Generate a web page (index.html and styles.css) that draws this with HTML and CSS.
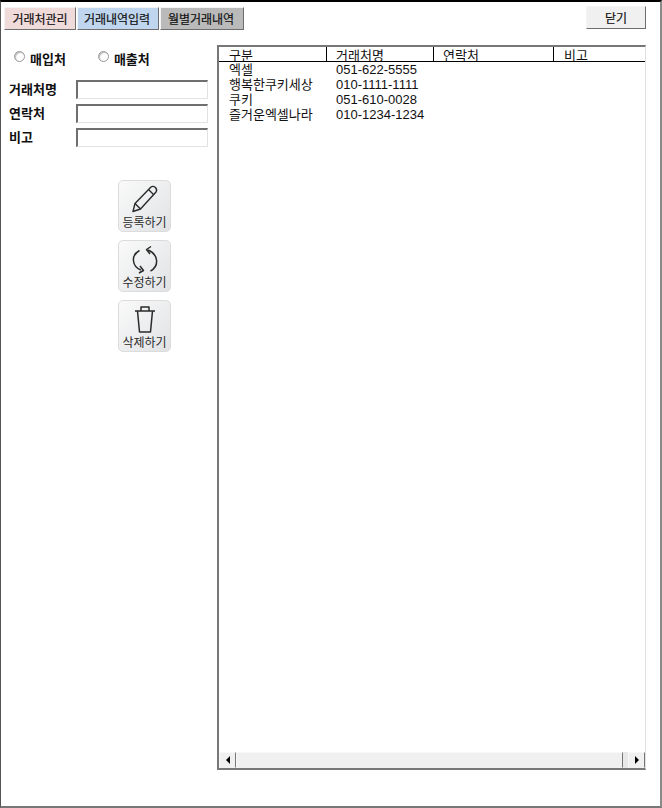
FILE: index.html
```html
<!DOCTYPE html>
<html lang="en">
<head>
    <meta charset="UTF-8">
    <title>거래처관리</title>
    <link rel="stylesheet" href="styles.css">
</head>
<body>
    <div class="window">
        <div class="toolbar">
            <div class="tabs">
                <button class="tab tab-red">거래처관리</button>
                <button class="tab tab-blue">거래내역입력</button>
                <button class="tab tab-gray">월별거래내역</button>
            </div>
            <button class="close-btn">닫기</button>
        </div>

        <div class="content">
            <div class="side">
                <div class="radios">
                    <label class="radio"><span class="radio-dot"></span>매입처</label>
                    <label class="radio"><span class="radio-dot"></span>매출처</label>
                </div>

                <div class="fields">
                    <div class="field"><span class="field-label">거래처명</span><span class="field-input"></span></div>
                    <div class="field"><span class="field-label">연락처</span><span class="field-input"></span></div>
                    <div class="field"><span class="field-label">비고</span><span class="field-input"></span></div>
                </div>

                <div class="actions">
                    <div class="action">
                        <svg width="30" height="30" viewBox="0 0 30 30" fill="none" stroke="#2a2a2a" stroke-width="1.4" stroke-linejoin="round">
                            <path d="M3 27.5 L5 19.5 L21 3 Q23 1.5 25.5 3.5 Q27.5 6 26 8 L10.5 25 Z"/>
                            <path d="M5 19.5 L10.5 25 M18.5 5.5 L24 11"/>
                        </svg>
                        <span>등록하기</span>
                    </div>
                    <div class="action">
                        <svg width="30" height="30" viewBox="0 0 30 30" fill="none" stroke="#2a2a2a" stroke-width="1.5" stroke-linejoin="round">
                            <path d="M9.5 6.5 C5 9 3 13 3.5 17 C4 21 6.5 24.5 11 26"/>
                            <path d="M20.5 27 C25 24.5 27 20 26.5 16 C26 12 24 8.5 18 6"/>
                            <path d="M21 2.5 L16.5 5.5 L20 10"/>
                            <path d="M10 22 L13.5 26.5 L9 29"/>
                        </svg>
                        <span>수정하기</span>
                    </div>
                    <div class="action">
                        <svg width="30" height="30" viewBox="0 0 30 30" fill="none" stroke="#2a2a2a" stroke-width="1.5" stroke-linejoin="round">
                            <path d="M5 7 H25"/>
                            <path d="M11 7 V3 H19 V7"/>
                            <path d="M7.5 7 L9.5 28 H20.5 L22.5 7"/>
                        </svg>
                        <span>삭제하기</span>
                    </div>
                </div>
            </div>

            <div class="list">
                <div class="list-head">
                    <div class="col col-1">구분</div>
                    <div class="col col-2">거래처명</div>
                    <div class="col col-3">연락처</div>
                    <div class="col col-4">비고</div>
                </div>
                <div class="list-body">
                    <div class="row"><div class="col-1">엑셀</div><div class="col-2">051-622-5555</div></div>
                    <div class="row"><div class="col-1">행복한쿠키세상</div><div class="col-2">010-1111-1111</div></div>
                    <div class="row"><div class="col-1">쿠키</div><div class="col-2">051-610-0028</div></div>
                    <div class="row"><div class="col-1">즐거운엑셀나라</div><div class="col-2">010-1234-1234</div></div>
                </div>
                <div class="scrollbar">
                    <div class="scroll-btn"><span class="arrow-left"></span></div>
                    <div class="scroll-thumb"></div>
                    <div class="scroll-track"></div>
                    <div class="scroll-btn"><span class="arrow-right"></span></div>
                </div>
            </div>
        </div>
    </div>
</body>
</html>
```
FILE: styles.css
```css
html, body {
    margin: 0;
    padding: 0;
}

body {
    width: 662px;
    height: 808px;
    overflow: hidden;
    background-color: #fff;
    font-family: "Liberation Sans", "Noto Sans CJK KR", sans-serif;
    font-size: 13px;
    color: #111;
}

.window {
    box-sizing: border-box;
    width: 662px;
    height: 808px;
    border-top: 2px solid #000;
    border-left: 1px solid #555;
    border-right: 2px solid #8a8a8a;
    border-bottom: 2px solid #777;
    display: flex;
    flex-direction: column;
}

.toolbar {
    display: flex;
    justify-content: space-between;
    padding: 4px 14px 0 3px;
    height: 39px;
    box-sizing: border-box;
}

.tabs {
    display: flex;
    gap: 1px;
    height: 23px;
    margin-top: 1px;
}

.tab,
.close-btn {
    font: inherit;
    font-size: 12px;
    padding: 0;
    color: #111;
    border: 1px solid;
    border-color: #f4f4f4 #6e6e6e #6e6e6e #f4f4f4;
    -webkit-text-stroke: 0.2px #111;
}

.tab:nth-child(1) { width: 72px; }
.tab:nth-child(2) { width: 82px; padding-right: 2px; }
.tab:nth-child(3) { width: 84px; padding-right: 2px; }

.tab-red { background-color: #f0dbdb; }
.tab-blue { background-color: #c0d6ee; }
.tab-gray { background-color: #bababa; }

.close-btn {
    width: 60px;
    height: 23px;
    background-color: #f0f0f0;
}

.content {
    display: flex;
    flex: 1;
    min-height: 0;
    padding-right: 14px;
}

.side {
    width: 216px;
    flex-shrink: 0;
}

.radios {
    display: flex;
    padding: 10px 0 0 13px;
    height: 26px;
    box-sizing: border-box;
    gap: 32px;
}

.radio {
    display: flex;
    align-items: center;
    gap: 5px;
    height: 14px;
    font-weight: bold;
}

.radio-dot {
    width: 9px;
    height: 9px;
    border-radius: 50%;
    border: 1px solid #999;
    background-color: #fff;
    box-shadow: inset 1px 1px 1px #bbb;
    position: relative;
    top: -2px;
}

.fields {
    padding: 13px 8px 0 8px;
    display: flex;
    flex-direction: column;
    gap: 5px;
}

.field {
    display: flex;
    align-items: center;
    height: 19px;
}

.field-label {
    width: 67px;
    font-weight: bold;
    padding-bottom: 3px;
}

.field-input {
    box-sizing: border-box;
    width: 132px;
    height: 19px;
    background-color: #fff;
    border: 1px solid;
    border-color: #6f6f6f #e2e2e2 #e2e2e2 #6f6f6f;
    border-width: 2px 1px 1px 2px;
}

.actions {
    display: flex;
    flex-direction: column;
    align-items: flex-start;
    gap: 8px;
    padding: 33px 0 0 117px;
}

.action {
    box-sizing: border-box;
    width: 53px;
    height: 52px;
    border: 1px solid #dcdcdc;
    border-radius: 5px;
    background: linear-gradient(135deg, #fafafa, #e0e2e4);
    display: flex;
    flex-direction: column;
    align-items: center;
    font-size: 12px;
    color: #2a2a2a;
    line-height: 14px;
}

.action svg {
    margin-top: 3px;
    margin-bottom: 2px;
    flex-shrink: 0;
}

.list {
    flex: 1;
    height: 725px;
    box-sizing: border-box;
    border: 2px solid;
    border-color: #777 #e0e0e0 #777 #777;
    border-right-width: 1px;
    display: flex;
    flex-direction: column;
    margin-top: 4px;
}

.list-head {
    display: flex;
    height: 15px;
    border-bottom: 1px solid #000;
    line-height: 18px;
    overflow: hidden;
    box-sizing: border-box;
}

.list-head .col {
    border-right: 1px solid #000;
}

.list-head .col-4 {
    border-right: none;
}

.col-1 { width: 108px; padding-left: 10px; box-sizing: border-box; }
.col-2 { width: 107px; padding-left: 9px; box-sizing: border-box; }
.col-3 { width: 120px; padding-left: 9px; box-sizing: border-box; }
.col-4 { flex: 1; padding-left: 10px; box-sizing: border-box; }

.list-body {
    flex: 1;
}

.row {
    display: flex;
    height: 15px;
    line-height: 15px;
}

.scrollbar {
    display: flex;
    height: 16px;
}

.scroll-btn {
    box-sizing: border-box;
    width: 17px;
    height: 16px;
    background-color: #f0f0f0;
    border: 1px solid;
    border-color: #f8f8f8 #777 #f0f0f0 #f8f8f8;
    display: flex;
    align-items: center;
    justify-content: center;
}

.arrow-left {
    border-top: 4px solid transparent;
    border-bottom: 4px solid transparent;
    border-right: 4px solid #000;
}

.arrow-right {
    border-top: 4px solid transparent;
    border-bottom: 4px solid transparent;
    border-left: 4px solid #000;
}

.scroll-thumb {
    flex: 1;
    box-sizing: border-box;
    background-color: #f0f0f0;
    border: 1px solid;
    border-color: #f8f8f8 #777 #f0f0f0 #f8f8f8;
}

.scroll-track {
    width: 5px;
    background-color: #e8e8e8;
}
```
